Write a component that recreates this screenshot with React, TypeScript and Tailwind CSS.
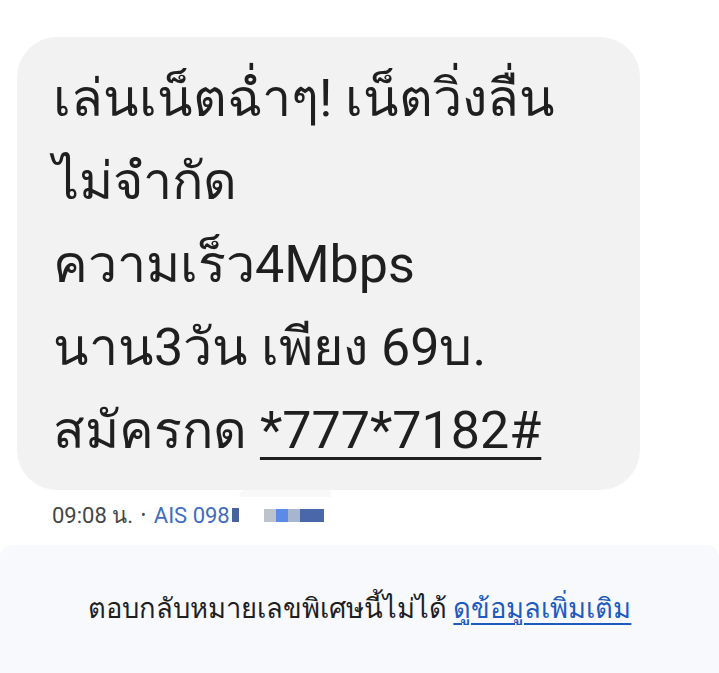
import React from "react";

export default function App() {
  return (
    <div
      className="w-[719px] h-[673px] bg-white relative overflow-hidden"
      style={{ fontFamily: 'Roboto, "Noto Sans", "DejaVu Sans", sans-serif' }}
    >
      <div className="pt-[37px] pl-[17px]">
        <div className="relative w-[623px] h-[453px] bg-[#f2f2f2] rounded-[40px] pl-[36px] pt-[20px] text-[#1f1f1f] text-[52px] leading-[83px]">
          <div>เล่นเน็ตฉ่ำๆ! เน็ตวิ่งลื่น</div>
          <div>ไม่จำกัด</div>
          <div>ความเร็ว4Mbps</div>
          <div>นาน3วัน เพียง 69บ.</div>
          <div>
            สมัครกด{" "}
            <span className="underline decoration-[3px] underline-offset-[9px]">*777*7182#</span>
          </div>
          <div className="absolute left-[222px] top-[453px] w-[92px] h-[7px] bg-[#f8f8f8] rounded-tl-[30px] rounded-tr-[6px]" />
        </div>
        <div className="flex items-center h-[30px] mt-[10px] pl-[35px] text-[22px] text-[#444746]">
          <span>09:08 น.</span>
          <span className="mx-[8px] text-[14px]">•</span>
          <span className="text-[#3f6cc0]">AIS 098</span>
          <span className="w-[7px] h-[14px] bg-[#46629f] ml-[2px]" />
          <span className="ml-[25px] flex">
            <span className="w-[12px] h-[13px] bg-[#bcc3cd]" />
            <span className="w-[12px] h-[13px] bg-[#5b8be6]" />
            <span className="w-[12px] h-[13px] bg-[#a7b6cf]" />
            <span className="w-[24px] h-[13px] bg-[#4a68a9]" />
          </span>
        </div>
      </div>
      <div className="absolute left-0 right-0 top-[545px] bottom-0 bg-[#f7f9fd] rounded-t-[12px] flex justify-center pt-[46px]">
        <div className="text-[27.3px] leading-[36px] text-[#1f1f1f]">
          ตอบกลับหมายเลขพิเศษนี้ไม่ได้{" "}
          <span className="text-[#1d5bbf] underline decoration-[2px] underline-offset-[5px]">ดูข้อมูลเพิ่มเติม</span>
        </div>
      </div>
    </div>
  );
}
